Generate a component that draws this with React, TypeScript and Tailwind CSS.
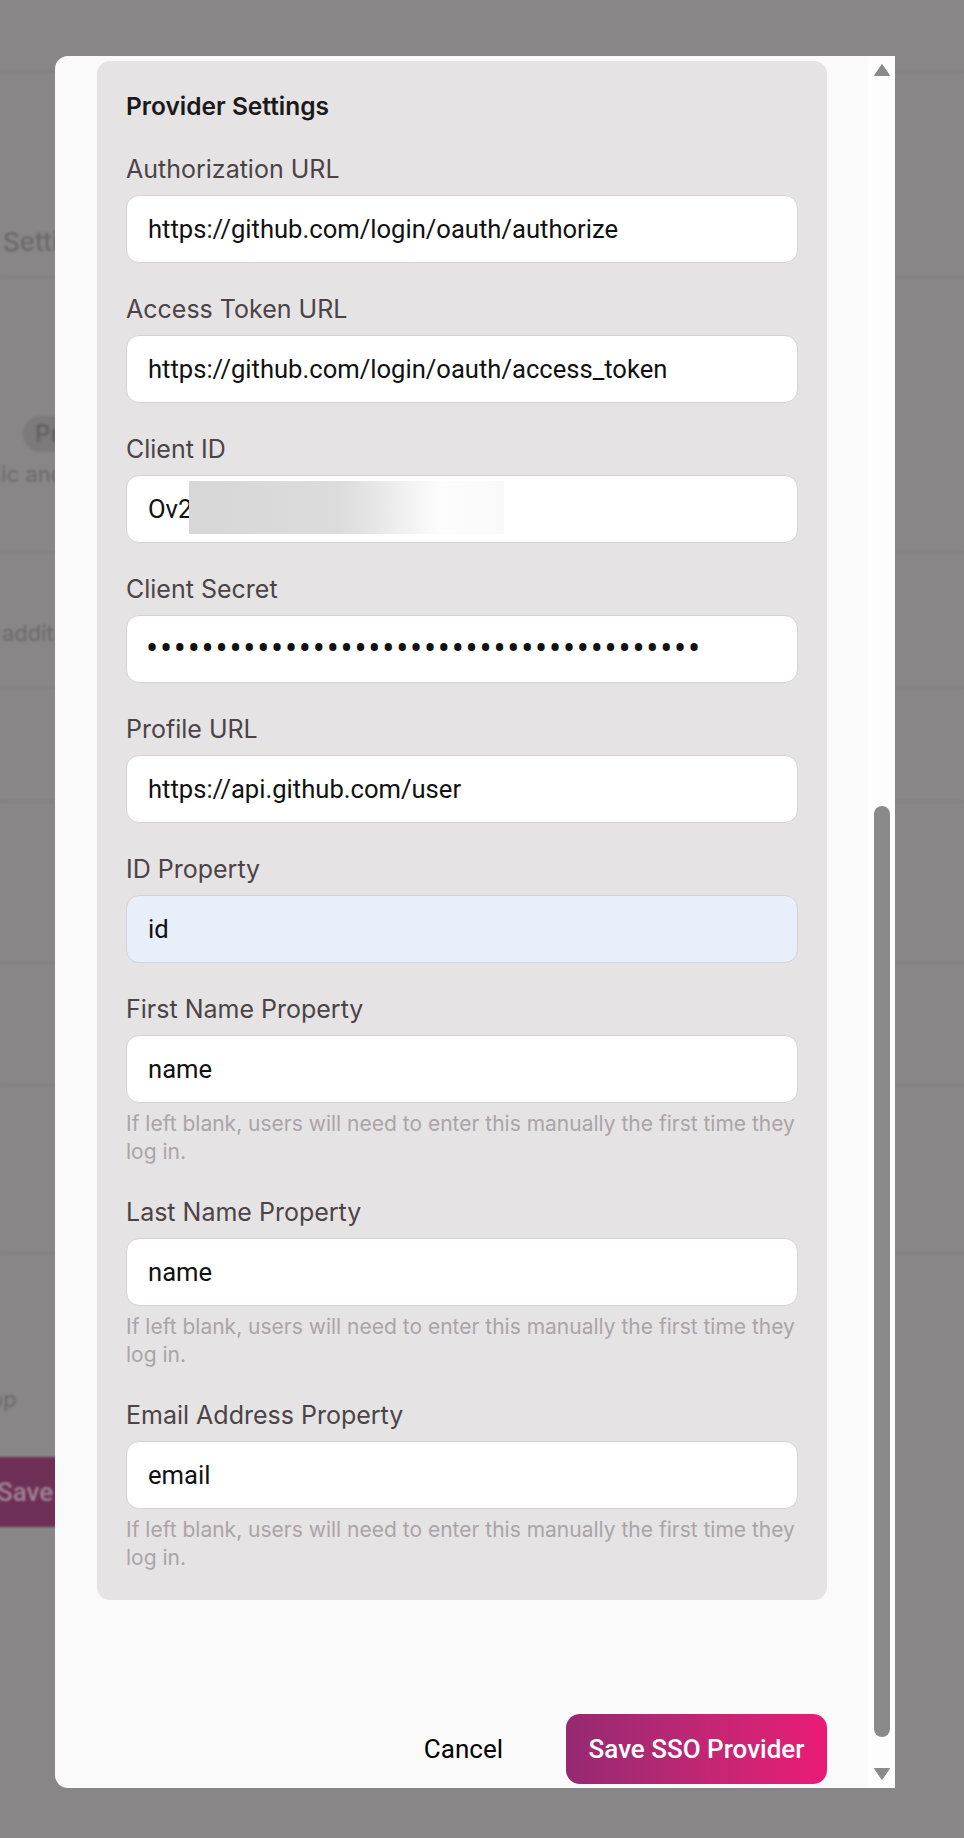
import React from "react";

interface Field {
  label: string;
  value: string;
  kind?: "text" | "secret" | "redacted" | "autofill";
  help?: string;
}

const HELP = "If left blank, users will need to enter this manually the first time they log in.";

const FIELDS: Field[] = [
  { label: "Authorization URL", value: "https://github.com/login/oauth/authorize" },
  { label: "Access Token URL", value: "https://github.com/login/oauth/access_token" },
  { label: "Client ID", value: "Ov2", kind: "redacted" },
  { label: "Client Secret", value: "•".repeat(40), kind: "secret" },
  { label: "Profile URL", value: "https://api.github.com/user" },
  { label: "ID Property", value: "id", kind: "autofill" },
  { label: "First Name Property", value: "name", help: HELP },
  { label: "Last Name Property", value: "name", help: HELP },
  { label: "Email Address Property", value: "email", help: HELP },
];

function Backdrop() {
  // the settings page behind the dialog, dimmed and slightly blurred
  return (
    <div className="absolute inset-0 blur-[1px] font-['Inter',sans-serif] text-[26px] text-[#6c696b]">
      <div className="h-[72px] border-b border-[#7e7c7d]" />
      <div className="flex h-[205px] items-end border-b border-[#7e7c7d] pb-[15px] pl-[3px] font-medium">
        Settings
      </div>
      <div className="h-[276px] border-b border-[#7e7c7d] pt-[136px]">
        <span className="ml-[23px] inline-flex h-[36px] items-center rounded-full bg-[#7d7a7c] px-[12px] text-[24px] font-semibold text-[#656264]">
          Provider
        </span>
        <div className="-ml-[37px] mt-[8px] whitespace-nowrap text-[22px] leading-[28px]">Basic and advanced</div>
      </div>
      <div className="h-[135px] border-b border-[#7e7c7d] pt-[66px] pl-[2px] text-[22px] leading-[28px] whitespace-nowrap">
        additional
      </div>
      <div className="h-[114px] border-b border-[#7e7c7d]" />
      <div className="h-[161px] border-b border-[#7e7c7d]" />
      <div className="h-[122px] border-b border-[#7e7c7d]" />
      <div className="h-[168px] border-b border-[#7e7c7d]" />
      <div className="-ml-[10px] pt-[132px] text-[22px] leading-[28px]">op</div>
      <div className="-ml-[30px] mt-[44px] flex h-[70px] w-[180px] items-center rounded-[14px] bg-[#6e2f56] pl-[27px] font-['Roboto',sans-serif] text-[26px] font-medium text-[#a08596]">
        Save
      </div>
    </div>
  );
}

function Input({ field }: { field: Field }) {
  const bg = field.kind === "autofill" ? "bg-[#e8eefa]" : "bg-white";
  const text =
    field.kind === "secret" ? "text-[36px] tracking-[1.75px] pl-[19px]" : "text-[25.6px] pl-[21px]";
  return (
    <div className="relative">
      <div
        className={`flex h-[68px] w-full items-center rounded-[13px] border border-[#d5d2d3] font-['Roboto',sans-serif] text-[#111] ${bg} ${text}`}
      >
        {field.value}
      </div>
      {field.kind === "redacted" && (
        <div className="absolute left-[63px] top-[6px] h-[53px] w-[315px] bg-[linear-gradient(to_right,#d7d7d7_0%,#dcdcdc_48%,#ececec_64%,#fdfdfd_80%,#f9f9f9_100%)]" />
      )}
    </div>
  );
}

function ScrollTrack() {
  return (
    <div className="flex w-[27px] shrink-0 flex-col items-center bg-[#fdfdfd] pt-[8px]">
      <svg width="16" height="12" viewBox="0 0 16 12">
        <path d="M8 0.5 L15.5 11.5 L0.5 11.5 Z" fill="#8a8a8a" stroke="#8a8a8a" strokeLinejoin="round" />
      </svg>
      <div className="mt-[730px] h-[931px] w-[16px] rounded-full bg-[#8a8a8a]" />
      <svg className="mt-[31px]" width="16" height="12" viewBox="0 0 16 12">
        <path d="M0.5 0.5 L15.5 0.5 L8 11.5 Z" fill="#8a8a8a" stroke="#8a8a8a" strokeLinejoin="round" />
      </svg>
    </div>
  );
}

export default function App() {
  return (
    <div className="relative h-[1838px] w-full overflow-hidden bg-[#888687]">
      <Backdrop />
      <div className="absolute left-[55px] top-[56px] flex h-[1732px] w-[840px] overflow-hidden rounded-l-[13px] bg-[#fafafa]">
        <div className="min-w-0 flex-1 overflow-hidden pt-[5px] pl-[42px] pr-[41px]">
          <div className="flex flex-col gap-[28px] rounded-[13px] bg-[#e5e3e4] px-[29px] pt-[28px] pb-[28px] font-['Inter',sans-serif]">
            <h3 className="text-[24.5px] font-semibold leading-[34px] text-[#1b191a]">Provider Settings</h3>
            {FIELDS.map((f) => (
              <div key={f.label}>
                <label className="mb-[8px] block text-[25px] leading-[36px] text-[#4b4347]">{f.label}</label>
                <Input field={f} />
                {f.help && (
                  <p className="mt-[7px] text-[21px] leading-[28px] text-[#aca4a8]">{f.help}</p>
                )}
              </div>
            ))}
          </div>
          <div className="mt-[114px] flex items-center justify-end gap-[63px]">
            <button className="font-['Roboto',sans-serif] text-[26px] text-black">Cancel</button>
            <button className="h-[70px] w-[261px] rounded-[14px] bg-linear-to-r from-[#952971] to-[#ea1a76] font-['Roboto',sans-serif] text-[26px] font-medium text-white">
              Save SSO Provider
            </button>
          </div>
        </div>
        <ScrollTrack />
      </div>
    </div>
  );
}
